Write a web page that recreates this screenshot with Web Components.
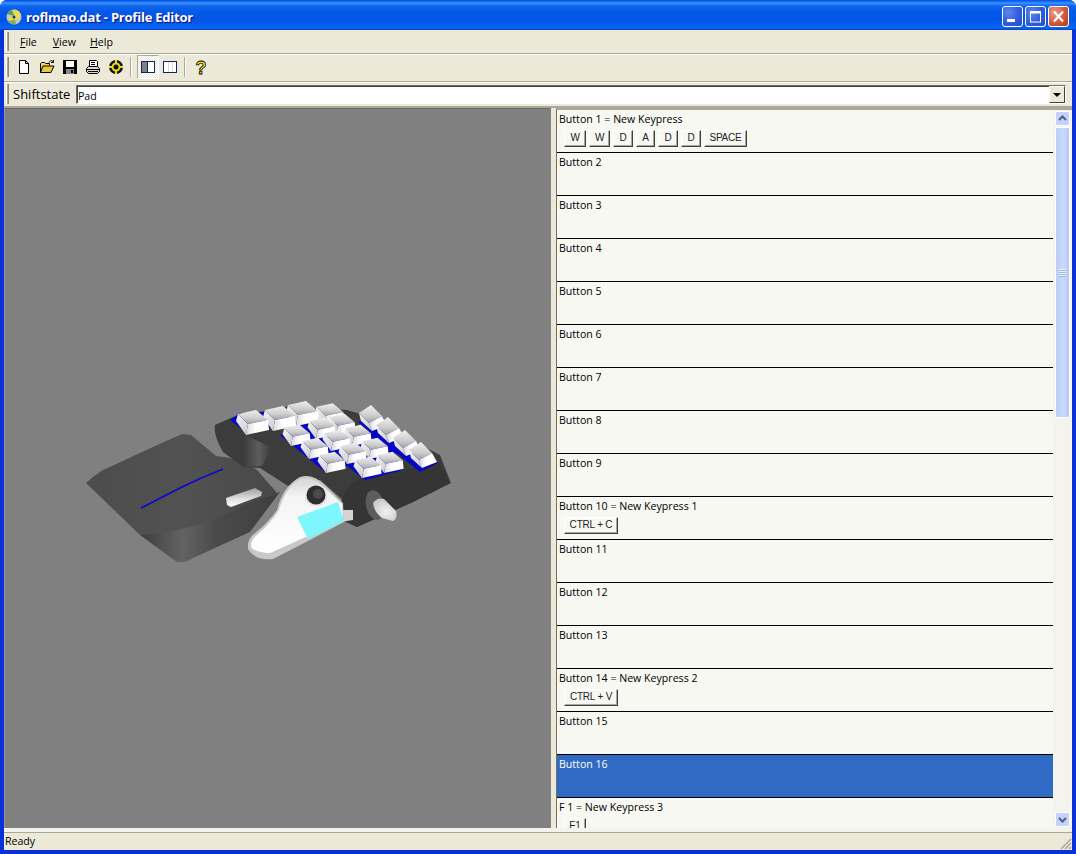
<!DOCTYPE html>
<html>
<head>
<meta charset="utf-8">
<title>Profile Editor</title>
<style>
  html, body { margin: 0; padding: 0; background: #fff; overflow: hidden; }
  body { font-family: "Open Sans", "Liberation Sans", sans-serif; font-size: 11px; }
</style>
</head>
<body>
<xp-window caption="roflmao.dat - Profile Editor">
  <xp-menubar></xp-menubar>
  <xp-toolbar></xp-toolbar>
  <shift-bar label="Shiftstate" value="Pad"></shift-bar>
  <split-view>
    <device-view slot="left"></device-view>
    <button-list slot="right">
      <button-row label="Button 1 = New Keypress" keys="W:22,W:21,D:20,A:19,D:20,D:20,SPACE:43"></button-row>
      <button-row label="Button 2"></button-row>
      <button-row label="Button 3"></button-row>
      <button-row label="Button 4"></button-row>
      <button-row label="Button 5"></button-row>
      <button-row label="Button 6"></button-row>
      <button-row label="Button 7"></button-row>
      <button-row label="Button 8"></button-row>
      <button-row label="Button 9"></button-row>
      <button-row label="Button 10 = New Keypress 1" keys="CTRL + C:54"></button-row>
      <button-row label="Button 11"></button-row>
      <button-row label="Button 12"></button-row>
      <button-row label="Button 13"></button-row>
      <button-row label="Button 14 = New Keypress 2" keys="CTRL + V:54"></button-row>
      <button-row label="Button 15"></button-row>
      <button-row label="Button 16" selected></button-row>
      <button-row label="F 1 = New Keypress 3" keys="F1:22"></button-row>
    </button-list>
  </split-view>
  <xp-status text="Ready"></xp-status>
</xp-window>

<script>
customElements.define("xp-window", class XpWindow extends HTMLElement {
  constructor() {
    super();
    this.attachShadow({mode: "open"});
  }
  connectedCallback() {
    this.shadowRoot.innerHTML = `
      <style>
        :host { display: flex; flex-direction: column; width: 1076px; height: 854px; box-sizing: border-box;
                background: #0831d9; border-radius: 7px 7px 0 0; overflow: hidden; }
        .title { height: 30px; flex: none; display: flex; align-items: center; padding: 3px 7px 0 6px; box-sizing: border-box;
                 background: linear-gradient(#0a55e0 0, #0a5cf0 1px, #3a93ff 3px, #0f65ea 6px, #0558e8 12px, #0355e5 20px, #0560f0 26px, #0a66f4 28px, #0340c8 30px); }
        .logo { width: 16px; height: 16px; margin-right: 4px; flex: none; }
        .caption { color: #fff; font: 700 13px "Open Sans", sans-serif; letter-spacing: -.22px; text-shadow: 1px 1px 1px #0f1089; flex: 1; white-space: nowrap; }
        .btn { width: 21px; height: 21px; box-sizing: border-box; border: 1px solid #fff; border-radius: 3px; margin-left: 2px; flex: none;
               background: radial-gradient(circle at 30% 30%, #5d88ef, #2f5cdc 55%, #2a4fc8 90%, #6e8ee8); }
        .btn.close { background: radial-gradient(circle at 30% 30%, #e6a08a, #d2573a 55%, #c13e1f 90%, #d87a5f); }
        .btn svg { display: block; width: 19px; height: 19px; }
        .body { flex: 1; min-height: 0; margin: 0 4px 4px; background: #ece9d8; display: flex; flex-direction: column; }
      </style>
      <div class="title">
        <svg class="logo" viewBox="0 0 16 16">
          <circle cx="8" cy="8" r="7.5" fill="#c9c9b8"/>
          <path d="M8 .5A7.5 7.5 0 0 1 15 6L9 8Z" fill="#e8d84a"/>
          <path d="M1 5A7.5 7.5 0 0 1 6 1L8 7Z" fill="#5f9e4a"/>
          <path d="M2 12 8 8l2 7a7.5 7.5 0 0 1-8-3Z" fill="#7fae5a"/>
          <path d="M3 9.5 13 5.5l1 2.5-10 4Z" fill="#e9e23a"/>
          <circle cx="8" cy="8" r="1.5" fill="#335"/>
        </svg>
        <div class="caption">${this.getAttribute("caption")}</div>
        <div class="btn"><svg viewBox="0 0 19 19"><rect x="4" y="12" width="8" height="3" fill="#fff"/></svg></div>
        <div class="btn"><svg viewBox="0 0 19 19"><rect x="4.5" y="5" width="10" height="10" fill="none" stroke="#fff"/><rect x="4" y="4" width="11" height="2.5" fill="#fff"/></svg></div>
        <div class="btn close"><svg viewBox="0 0 19 19"><path d="M5 4.5 14 14.500M14 4.500 5 14.500" stroke="#fff" stroke-width="2.200" fill="none"/></svg></div>
      </div>
      <div class="body"><slot></slot></div>
    `;
  }
});

customElements.define("xp-menubar", class XpMenubar extends HTMLElement {
  constructor() {
    super();
    this.attachShadow({mode: "open"});
  }
  connectedCallback() {
    this.shadowRoot.innerHTML = `
      <style>
        :host { display: flex; align-items: center; height: 24px; flex: none; box-sizing: border-box; padding-left: 2px;
                border-bottom: 1px solid #aca899; color: #000; }
        .grip { width: 1px; height: 19px; background: #aca899; border-left: 1px solid #fff; border-right: 1px solid #8c8a7c; margin-right: 11px; }
        span { margin-right: 16px; font: 10.6px "Open Sans", sans-serif; }
        span.v { margin-right: 14px; }
        u { text-underline-offset: 1px; }
      </style>
      <div class="grip"></div>
      <span><u>F</u>ile</span><span class="v"><u>V</u>iew</span><span><u>H</u>elp</span>
    `;
  }
});

customElements.define("xp-toolbar", class XpToolbar extends HTMLElement {
  constructor() {
    super();
    this.attachShadow({mode: "open"});
  }
  connectedCallback() {
    this.shadowRoot.innerHTML = `
      <style>
        :host { display: flex; align-items: center; height: 28px; flex: none; box-sizing: border-box; padding: 0 0 2px 2px;
                border-top: 1px solid #fff; border-bottom: 1px solid #aca899; }
        .grip { width: 1px; height: 20px; background: #aca899; border-left: 1px solid #fff; border-right: 1px solid #8c8a7c; margin-right: 3px; }
        .b { width: 23px; height: 22px; display: flex; align-items: center; justify-content: center; flex: none; }
        .b svg { width: 16px; height: 16px; display: block; overflow: visible; }
        .b.on { background: repeating-conic-gradient(#fff 0 25%, #ece9d8 0 50%) 0 0/2px 2px; box-sizing: border-box;
                border: 1px solid; border-color: #aca899 #fff #fff #aca899; }
        .sep { width: 1px; height: 20px; background: #aca899; border-right: 1px solid #fff; margin: 0 4px 0 3px; flex: none; }
      </style>
      <div class="grip"></div>
      <div class="b"><svg viewBox="0 0 16 16"><path d="M3.500 1.500h6l3 3v10h-9Z M9.500 1.500v3h3" fill="#fff" stroke="#000"/></svg></div>
      <div class="b"><svg viewBox="0 0 16 16"><path d="M1.500 13.500v-9l1-1h3l1 1h4v2" fill="#f0d860" stroke="#000"/><path d="M1.500 13.500 4 7h11l-3 6.500Z" fill="#e8c840" stroke="#000"/><path d="M10 3.500C11 1.500 13 1 14.500 3M14.500 1v2.500H12" fill="none" stroke="#000"/></svg></div>
      <div class="b"><svg viewBox="0 0 16 16"><rect x="1" y="1" width="14" height="14" fill="#000"/><rect x="4" y="2" width="8" height="6" fill="#fff"/><rect x="4" y="10" width="8" height="5" fill="#8a8a8a"/><rect x="9" y="11" width="2" height="3" fill="#000"/></svg></div>
      <div class="b"><svg viewBox="0 0 16 16"><path d="M4.500 7.500v-6h7l1 1v5" fill="#fff" stroke="#000"/><path d="M6 3.500h4M6 5.500h4" stroke="#000"/><path d="M1.500 9.500l2-2h9l2 2v3l-2 2h-9l-2-2Z" fill="#d8d8d0" stroke="#000"/><path d="M2 10.500h12M3 12.500h10" stroke="#000"/></svg></div>
      <div class="b"><svg viewBox="0 0 16 16"><circle cx="8" cy="8" r="7" fill="#111"/><circle cx="8" cy="8" r="4.500" fill="#e8d820"/><path d="M8 1v14M1 8h14" stroke="#e8d820" stroke-width="2"/><circle cx="8" cy="8" r="2.500" fill="#111"/></svg></div>
      <div class="sep" style="margin-right:5px"></div>
      <div class="b on" style="width:22px;height:24px"><svg viewBox="0 0 16 16"><rect x="1.500" y="2.500" width="13" height="11" fill="#fff" stroke="#0a246a"/><rect x="2" y="3" width="5" height="10" fill="#808080"/><path d="M7.500 3v10" stroke="#0a246a"/></svg></div>
      <div class="b" style="margin-left:-1px"><svg viewBox="0 0 16 16"><rect x="1.500" y="2.500" width="13" height="11" fill="#fff" stroke="#0a246a"/><path d="M6.500 3v10M10.500 3v10" stroke="#d6dcf0"/></svg></div>
      <div class="sep" style="margin:0 3px 0 3px"></div>
      <div class="b"><svg viewBox="0 0 16 16"><text x="8" y="14.500" text-anchor="middle" font-family="Liberation Sans" font-weight="700" font-size="18" fill="#f4e820" stroke="#000" stroke-width=".8">?</text></svg></div>
    `;
  }
});

customElements.define("shift-bar", class ShiftBar extends HTMLElement {
  constructor() {
    super();
    this.attachShadow({mode: "open"});
  }
  connectedCallback() {
    this.shadowRoot.innerHTML = `
      <style>
        :host { display: flex; align-items: center; height: 26px; flex: none; box-sizing: border-box; padding: 0 6px 0 2px;
                border-top: 1px solid #fff; border-bottom: 2px solid #aca899; }
        .grip { width: 1px; height: 20px; background: #aca899; border-left: 1px solid #fff; border-right: 1px solid #8c8a7c; margin: -2px 4px 0 0; }
        label { font: 13px "Open Sans", sans-serif; width: 63px; flex: none; white-space: nowrap; margin-top: -2px; }
        .combo { flex: 1; height: 19px; display: flex; box-sizing: border-box; background: #fff; border: 1px solid; border-color: #716f64 #fff #fff #716f64;
                 box-shadow: inset 1px 1px 0 #404040; font: 10.6px "Open Sans", sans-serif; line-height: 18px; padding-left: 1px; }
        .val { flex: 1; padding-top: 1px; }
        .drop { width: 16px; height: 17px; box-sizing: border-box; background: #ece9d8; border: 1px solid; border-color: #fff #404040 #404040 #fff;
                display: flex; align-items: center; justify-content: center; }
        .drop i { width: 0; height: 0; border: 4px solid transparent; border-top: 4px solid #000; border-bottom: 0; }
      </style>
      <div class="grip"></div>
      <label>${this.getAttribute("label")}</label>
      <div class="combo"><div class="val">${this.getAttribute("value")}</div><div class="drop"><i></i></div></div>
    `;
  }
});

customElements.define("split-view", class SplitView extends HTMLElement {
  constructor() {
    super();
    this.attachShadow({mode: "open"});
  }
  connectedCallback() {
    this.shadowRoot.innerHTML = `
      <style>
        :host { display: flex; flex: 1; min-height: 0; }
        .l { width: 547px; flex: none; box-sizing: border-box; border-left: 1px solid #9a9a90; border-bottom: 0; display: flex; }
        .bar { width: 5px; flex: none; background: #ece9d8; }
        .r { flex: 1; min-width: 0; display: flex; }
      </style>
      <div class="l"><slot name="left"></slot></div>
      <div class="bar"></div>
      <div class="r"><slot name="right"></slot></div>
    `;
  }
});

customElements.define("device-view", class DeviceView extends HTMLElement {
  constructor() {
    super();
    this.attachShadow({mode: "open"});
  }
  key(x, y, s) {
    return `<g transform="translate(${x} ${y}) scale(${s})">
      <polygon points="-15,-8 -5,2 -7,13 -17,-1" fill="url(#left)"/>
      <polygon points="-15,-8 3,-12 15,-2 -5,2" fill="url(#top)"/>
      <polygon points="-5,2 15,-2 16,8 -7,13" fill="url(#front)"/>
    </g>`;
  }
  sideKey(x, y) {
    return `<g transform="translate(${x} ${y})">
      <polygon points="-14,-5 -4,5 -1,13 -12,3" fill="url(#left)"/>
      <polygon points="-14,-5 -2,-13 9,-2 -4,5" fill="url(#top)"/>
      <polygon points="-4,5 9,-2 14,7 -1,13" fill="url(#front)"/>
    </g>`;
  }
  connectedCallback() {
    const keys = [[330,414,.9],[303,413,1],[280,418,1],[253,422,1],[342,424,.85],[322,428,.85],[358,435,.85],[297,435,.85],[337,440,.85],[375,448,.85],[315,448,.85],[353,453,.85],[390,462,.85],[332,462,.85],[368,467,.85]];
    const side = [[373,418],[390,430],[407,443],[423,455]];
    this.shadowRoot.innerHTML = `
      <style>
        :host { display: block; flex: 1; background: #808080; box-shadow: inset 0 1px 0 #6a6a6a; border-bottom: 0; overflow: hidden; }
        svg { display: block; width: 100%; height: 100%; }
      </style>
      <svg viewBox="5 108 546 720" preserveAspectRatio="xMinYMin slice">
        <defs>
          <linearGradient id="top" x1="0" y1="0" x2="0" y2="1"><stop offset="0" stop-color="#f0f0f0"/><stop offset=".6" stop-color="#cccccc"/><stop offset="1" stop-color="#a0a0a0"/></linearGradient>
          <linearGradient id="front" x1="0" y1="0" x2="1" y2="0"><stop offset="0" stop-color="#d8d8d8"/><stop offset=".4" stop-color="#fff"/><stop offset="1" stop-color="#fff"/></linearGradient>
          <linearGradient id="left" x1="0" y1="0" x2="1" y2="1"><stop offset="0" stop-color="#f4f4f4"/><stop offset="1" stop-color="#cccccc"/></linearGradient>
          <linearGradient id="pad" x1="0" y1="0" x2="1" y2="0"><stop offset="0" stop-color="#4c4c4c"/><stop offset=".5" stop-color="#525252"/><stop offset="1" stop-color="#484848"/></linearGradient>
          <linearGradient id="side" x1="0" y1="0" x2="1" y2="0"><stop offset="0" stop-color="#3c3c3c"/><stop offset=".3" stop-color="#636363"/><stop offset=".55" stop-color="#4a4a4a"/><stop offset="1" stop-color="#3e3e3e"/></linearGradient>
          <linearGradient id="lobe" x1="0" y1="0" x2="1" y2="0"><stop offset="0" stop-color="#3a3a3a"/><stop offset=".55" stop-color="#5e5e5e"/><stop offset="1" stop-color="#383838"/></linearGradient>
          <linearGradient id="pill" x1="0" y1="0" x2="0" y2="1"><stop offset="0" stop-color="#9c9c9c"/><stop offset=".6" stop-color="#e2e2e2"/><stop offset="1" stop-color="#fff"/></linearGradient>
          <linearGradient id="mouse" x1="0" y1="0" x2="0" y2="1"><stop offset="0" stop-color="#d6d6d6"/><stop offset=".25" stop-color="#f4f4f4"/><stop offset="1" stop-color="#fff"/></linearGradient>
          <radialGradient id="ball" cx=".55" cy=".6" r=".6"><stop offset="0" stop-color="#f2f2f2"/><stop offset="1" stop-color="#c9c9c9"/></radialGradient>
        </defs>
        <!-- wrist rest -->
        <path d="M140 535 L177 562 Q186 563 193 558 L250 532 L280 492 L225 510 Z" fill="url(#side)"/>
        <path d="M86 483 Q100 470 112 466 Q150 448 182 434 L191 435 L216 456 Q240 458 257 470 L278 494 Q250 500 232 512 Q190 532 140 535 Z" fill="url(#pad)"/>
        <path d="M141 508 L180 488 Q200 478 223 469" fill="none" stroke="#0b0bc8" stroke-width="1.800"/>
        <path d="M226 498 L255 488 L262 492 L261 496 L231 507 L227 505 Z" fill="url(#pill)"/>
        <!-- main body -->
        <path d="M215 425 L233 417 L290 406 L347 410 L364 415 L440 455 L451 483 L413 502 L357 527 L346 520 L343 500 L320 480 L288 486 L260 468 L243 467 L223 452 Q213 435 215 425 Z" fill="#3c3c3c"/>
        <path d="M243 434 L243 467 L262 466 L272 448 Z" fill="url(#lobe)"/>
        <path d="M341 502 Q348 480 365 478 L440 463 L450 483 L413 502 L357 527 L346 522 Z" fill="#353535"/>
        <!-- blue plates under the keys -->
        <polygon points="230,420 247,433 270,428 297,423 290,411 240,413" fill="#0606c8"/>
        <polygon points="280,435 325,472 347,466 365,480 403,470 390,440 340,420 300,425" fill="#0606c8"/>
        <polygon points="358,422 420,472 438,463 380,415" fill="#0606c8"/>
        ${keys.map(k => this.key(k[0], k[1], k[2])).join("")}
        ${side.map(k => this.sideKey(k[0], k[1])).join("")}
        <!-- thumb stick -->
        <ellipse cx="375" cy="505" rx="9" ry="15" transform="rotate(-12 375 505)" fill="#5c5c5c"/>
        <path d="M373 503 Q377 497 384 499 L396 511 Q398 518 393 521 L382 518 Q374 512 373 503 Z" fill="url(#ball)"/>
        <!-- mouse thumb piece -->
        <path d="M340 510 L353 510 L353 520 L340 522 Z" fill="#d4d4d4"/>
        <path d="M248 549 Q247 539 254 534 Q268 523 277 510 Q283 486 300 477 Q312 473 325 485 L343 503 L344 522 L310 540 L273 559 Q255 561 248 549 Z" fill="#c8c8c8"/>
        <path d="M251 547 Q251 539 257 535 Q270 524 279 510 Q285 488 300 479 Q312 476 324 487 L342 504 L343 520 L308 536 L270 553 Q256 553 251 547 Z" fill="url(#mouse)"/>
        <path d="M297 517 L338 502 L344 521 L308 539 Z" fill="#7ff6fb"/>
        <ellipse cx="316" cy="498" rx="11" ry="8" fill="#e2e2e2"/>
        <circle cx="316" cy="495" r="9.500" fill="#2e2e2e"/>
        <circle cx="318" cy="494" r="5" fill="#4a4a4a"/>
      </svg>
    `;
  }
});

customElements.define("button-list", class ButtonList extends HTMLElement {
  constructor() {
    super();
    this.attachShadow({mode: "open"});
  }
  connectedCallback() {
    const chev = d => `<svg width="13" height="13" viewBox="0 0 13 13"><path d="${d}" fill="none" stroke="#4d6185" stroke-width="2"/></svg>`;
    this.shadowRoot.innerHTML = `
      <style>
        :host { display: flex; flex: 1; min-width: 0; box-sizing: border-box; background: #f8f8f2; border-left: 1px solid #716f64; border-top: 2px solid #aca899; overflow: hidden; position: relative; }
        .rows { width: 496px; flex: none; overflow: hidden; height: 718px; }
        .sb { width: 18px; margin-left: 0; flex: none; background: #f4f3ee; padding: 0 1px 0 2px; box-sizing: border-box; height: 718px; display: flex; flex-direction: column; }
        .arrow { width: 15px; height: 15px; flex: none; box-sizing: border-box; border: 1px solid #fff; border-radius: 2px; background: #c3d3fc; display: flex; align-items: center; justify-content: center; margin-top: 1px; }
        .thumb { width: 15px; height: 291px; margin-top: 1px; box-sizing: border-box; border: 1px solid #fff; border-radius: 2px; background: linear-gradient(90deg, #bccdfa, #cbd9fd 60%, #b4c8f8); display: flex; align-items: center; justify-content: center; flex: none; }
        .thumb i { width: 7px; height: 8px; background: repeating-linear-gradient(#eef3fe 0 1px, #a4b9ea 1px 2px); }
        .sp { flex: 1; }
      </style>
      <div class="rows"><slot></slot></div>
      <div class="sb">
        <div class="arrow">${chev("M3 8 6.500 4.500 10 8")}</div>
        <div class="thumb"><i></i></div>
        <div class="sp"></div>
        <div class="arrow" style="margin-bottom:1px">${chev("M3 5 6.500 8.500 10 5")}</div>
      </div>
    `;
  }
});

customElements.define("key-cap", class KeyCap extends HTMLElement {
  constructor() {
    super();
    this.attachShadow({mode: "open"});
  }
  connectedCallback() {
    this.shadowRoot.innerHTML = `
      <style>
        :host { display: block; height: 17px; box-sizing: border-box; flex: none; background: #f8f8f2; color: #222;
                border-top: 1px solid #fff; border-left: 1px solid #fff; border-right: 1px solid #404040; border-bottom: 1px solid #404040;
                box-shadow: inset -1px -1px 0 #aca899; text-align: center; font: 10px "Liberation Sans", sans-serif; letter-spacing: -.2px; line-height: 14px; }
      </style>
      <slot></slot>
    `;
  }
});

customElements.define("button-row", class ButtonRow extends HTMLElement {
  constructor() {
    super();
    this.attachShadow({mode: "open"});
  }
  connectedCallback() {
    const keys = (this.getAttribute("keys") || "").split(",").filter(Boolean).map(k => {
      const p = k.split(":");
      return `<key-cap style="width:${p[1]}px">${p[0]}</key-cap>`;
    }).join("");
    const sel = this.hasAttribute("selected");
    this.shadowRoot.innerHTML = `
      <style>
        :host { display: block; height: 43px; box-sizing: border-box; border-bottom: 1px solid #000; padding: 2px 0 0 2px;
                background: ${sel ? "#316ac5" : "transparent"}; color: ${sel ? "#fff" : "#000"}; font: 10.6px "Open Sans", sans-serif; }
        .t { height: 15px; line-height: 15px; white-space: nowrap; }
        .k { display: flex; gap: 3px; margin: 3px 0 0 5px; }
      </style>
      <div class="t">${this.getAttribute("label")}</div>
      <div class="k">${keys}</div>
    `;
  }
});

customElements.define("xp-status", class XpStatus extends HTMLElement {
  constructor() {
    super();
    this.attachShadow({mode: "open"});
  }
  connectedCallback() {
    this.shadowRoot.innerHTML = `
      <style>
        :host { display: flex; align-items: center; height: 22px; flex: none; box-sizing: border-box; position: relative;
                border-top: 4px solid #f4f3ee; box-shadow: inset 0 1px 0 #aca899; padding: 0 0 1px 1px; font: 10.6px "Open Sans", sans-serif; }
        svg { position: absolute; right: 0; bottom: 0; }
      </style>
      <span>${this.getAttribute("text")}</span>
      <svg width="13" height="13" viewBox="0 0 13 13"><path d="M12 2 2 12M12 6 6 12M12 10 10 12" stroke="#aca899" stroke-width="1.500"/></svg>
    `;
  }
});
</script>
</body>
</html>
